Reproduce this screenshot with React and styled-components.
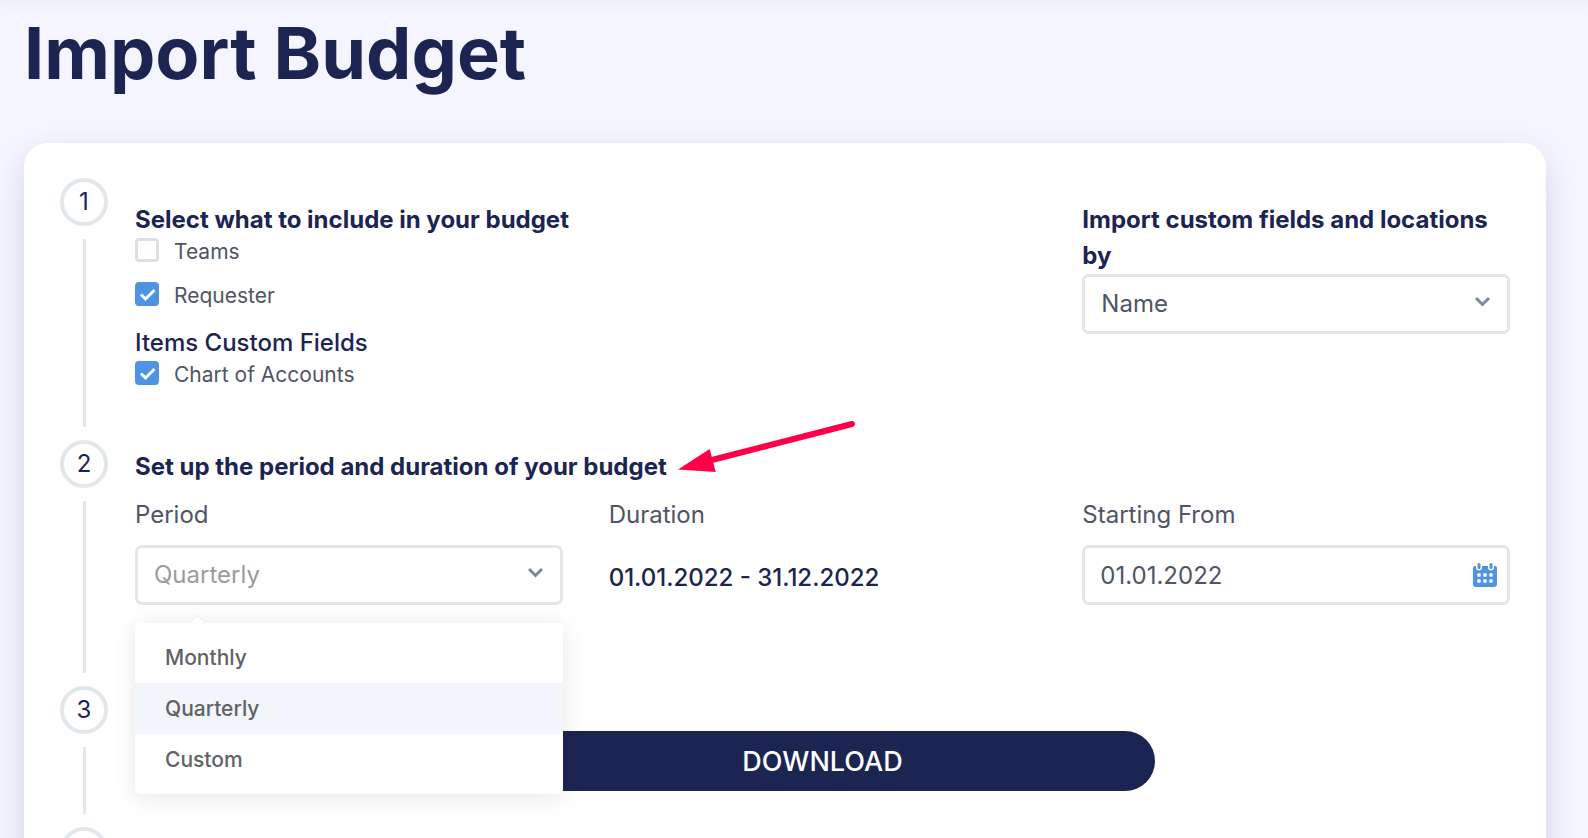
import React, { useState } from "react";
import styled, { createGlobalStyle } from "styled-components";

const navy = "#1c2451";
const slate = "#4f5565";
const line = "#e1e7eb";
const blue = "#4f93e3";

const GlobalStyle = createGlobalStyle`
  *, *::before, *::after { box-sizing: border-box; }
  body {
    margin: 0;
    background: #f5f5ff;
    color: ${navy};
    font-family: Inter, "Liberation Sans", sans-serif;
    font-size: 24px;
    line-height: 36px;
  }
  button, input, select { font: inherit; }
`;

const Page = styled.main`
  height: 100vh;
  overflow-y: auto;
  scrollbar-width: none;
  padding: 0 42px 0 24px;
  box-shadow: inset 0 12px 16px -12px rgba(40, 40, 110, 0.06);
`;

const Title = styled.h1`
  margin: 0;
  padding: 5px 0 42px;
  font-size: 72px;
  line-height: 96px;
  font-weight: 700;
`;

const Card = styled.section`
  padding: 35px 36px;
  background: #fff;
  border-radius: 24px;
  box-shadow: 0 12px 32px rgba(40, 50, 110, 0.16);
`;

const Step = styled.section`
  display: grid;
  grid-template-columns: 48px minmax(0, 1fr);
  column-gap: 27px;
  min-height: ${(p) => p.$height}px;
`;

const Rail = styled.div`
  display: flex;
  flex-direction: column;
  align-items: center;
  gap: 13px;
  padding-bottom: 13px;
`;

const Badge = styled.span`
  display: flex;
  flex: none;
  align-items: center;
  justify-content: center;
  width: 48px;
  height: 48px;
  border: 4px solid ${line};
  border-radius: 50%;
`;

const Connector = styled.span`
  flex: 1;
  width: 3px;
  background: ${line};
`;

const StepBody = styled.div`
  padding-top: ${(p) => p.$top}px;
`;

const Columns = styled.div`
  display: grid;
  grid-template-columns: repeat(3, minmax(0, 1fr));
  column-gap: 46px;
`;

const WideCell = styled.div`
  grid-column: span 2;
`;

const FieldCell = styled.div`
  position: relative;
  padding-top: 12px;
`;

const Heading = styled.h2`
  position: relative;
  width: fit-content;
  margin: 0;
  font-size: 24px;
  line-height: 36px;
  font-weight: 700;
`;

const HeadingLabel = styled.label`
  display: block;
  font-weight: 700;
`;

const SubHeading = styled.h3`
  margin: 19px 0 0;
  font-size: 24px;
  line-height: 36px;
  font-weight: 500;
`;

const CheckList = styled.div`
  display: flex;
  flex-direction: column;
  gap: 20px;
`;

const CheckLabel = styled.label`
  display: flex;
  align-items: flex-start;
  gap: 15px;
  width: fit-content;
  height: 24px;
  color: ${slate};
  font-size: 21px;
  line-height: 27px;
`;

const CheckBox = styled.span`
  display: grid;
  width: 24px;
  height: 24px;

  > * { grid-area: 1 / 1; }
  svg { pointer-events: none; }
`;

const CheckInput = styled.input`
  appearance: none;
  width: 24px;
  height: 24px;
  margin: 0;
  border: 3px solid #dcdfe6;
  border-radius: 4px;
  background: #fff;

  &:checked { border-color: ${blue}; background: ${blue}; }
`;

const FieldLabel = styled.label`
  display: block;
  margin-bottom: 12px;
  color: ${slate};
`;

const Field = styled.div`
  display: flex;
  align-items: center;
  height: 60px;
  border: 3px solid ${line};
  border-radius: 7px;
  background: #fff;
  padding-right: ${(p) => p.$end}px;
`;

const controlReset = `
  flex: 1;
  min-width: 0;
  height: 100%;
  padding: 0 0 0 16px;
  border: 0;
  outline: 0;
  background: transparent;
  appearance: none;
`;

const Select = styled.select`
  ${controlReset}
  color: ${(p) => (p.$muted ? "#9b9b9b" : slate)};
`;

const DateInput = styled.input`
  ${controlReset}
  padding-left: 15px;
  color: ${slate};
`;

const DurationLabel = styled.div`
  margin-bottom: 15px;
  color: ${slate};
`;

const DurationValue = styled.output`
  display: block;
  line-height: 60px;
  font-weight: 500;
`;

const Menu = styled.ul`
  position: absolute;
  z-index: 2;
  top: 100%;
  left: 0;
  right: 0;
  margin: 15px 0 0;
  padding: 9px 0;
  list-style: none;
  background: #fff;
  border-radius: 5px;
  box-shadow: 0 3px 24px rgba(0, 0, 0, 0.1);

  &::before {
    content: "";
    position: absolute;
    top: -6px;
    left: 56px;
    width: 12px;
    height: 12px;
    background: #fff;
    border: 1px solid #ebeef5;
    border-right: 0;
    border-bottom: 0;
    transform: rotate(45deg);
  }
`;

const MenuItem = styled.button`
  position: relative;
  display: block;
  width: 100%;
  height: 51px;
  padding: 0 30px;
  border: 0;
  background: ${(p) => (p.$active ? "#f2f6fa" : "#fff")};
  color: #606266;
  font-size: 21px;
  font-weight: 500;
  text-align: left;
`;

const DownloadButton = styled.button`
  display: block;
  width: 665px;
  max-width: 100%;
  height: 60px;
  margin: 0 auto;
  padding: 2px 0 0;
  border: 0;
  border-radius: 30px;
  background: ${navy};
  color: #fff;
  font-size: 27px;
  font-weight: 500;
`;

const Pointer = styled.svg`
  position: absolute;
  left: 100%;
  bottom: 10px;
  margin-left: 9px;
`;

const ChevronIcon = styled.svg`
  margin-bottom: 4px;
`;

function Chevron() {
  return (
    <ChevronIcon width="16" height="12" viewBox="0 0 16 12" fill="none" aria-hidden="true">
      <path d="M1 2l6.500 6.500L14 2" stroke="#7b88a0" strokeWidth="3" />
    </ChevronIcon>
  );
}

function CalendarIcon() {
  return (
    <svg width="24" height="24" viewBox="0 0 24 24" aria-hidden="true">
      <path
        fill={blue}
        d="M2 3h1v1.500a3 3 0 0 0 6 0V3h6v1.500a3 3 0 0 0 6 0V3h1a2 2 0 0 1 2 2v16a3 3 0 0 1-3 3H3a3 3 0 0 1-3-3V5a2 2 0 0 1 2-2Z"
      />
      <rect x="4.500" width="3" height="6" rx="1.500" fill={blue} />
      <rect x="16.500" width="3" height="6" rx="1.500" fill={blue} />
      {[12, 18].map((y) =>
        [6, 12, 18].map((x) => (
          <rect
            key={`${x}-${y}`}
            x={x - 1.7}
            y={y - 1.7}
            width="3.4"
            height="3.4"
            rx="0.8"
            fill="#fff"
          />
        ))
      )}
    </svg>
  );
}

function Check({ label, defaultChecked }) {
  return (
    <CheckLabel>
      <CheckBox>
        <CheckInput type="checkbox" defaultChecked={defaultChecked} />
        <svg width="24" height="24" viewBox="0 0 24 24" fill="none" aria-hidden="true">
          <path d="m6 12.500 4.500 4.500L19.500 8" stroke="#fff" strokeWidth="3" />
        </svg>
      </CheckBox>
      {label}
    </CheckLabel>
  );
}

function StepRow({ number, height, top, children }) {
  return (
    <Step $height={height}>
      <Rail>
        <Badge>{number}</Badge>
        <Connector />
      </Rail>
      <StepBody $top={top}>{children}</StepBody>
    </Step>
  );
}

const periods = ["Monthly", "Quarterly", "Custom"];

function PeriodField() {
  const [period, setPeriod] = useState("Quarterly");

  return (
    <FieldCell>
      <FieldLabel htmlFor="period">Period</FieldLabel>
      <Field $end={16}>
        <Select
          id="period"
          $muted
          value={period}
          onChange={(event) => setPeriod(event.target.value)}
        >
          {periods.map((name) => (
            <option key={name}>{name}</option>
          ))}
        </Select>
        <Chevron />
      </Field>
      <Menu>
        {periods.map((name) => (
          <li key={name}>
            <MenuItem type="button" $active={name === period} onClick={() => setPeriod(name)}>
              {name}
            </MenuItem>
          </li>
        ))}
      </Menu>
    </FieldCell>
  );
}

export default function App() {
  return (
    <>
      <GlobalStyle />
      <Page>
        <Title>Import Budget</Title>
        <Card>
          <StepRow number={1} height={262} top={24}>
            <Columns>
              <WideCell>
                <Heading>Select what to include in your budget</Heading>
                <CheckList>
                  <Check label="Teams" />
                  <Check label="Requester" defaultChecked />
                </CheckList>
                <SubHeading>Items Custom Fields</SubHeading>
                <CheckList>
                  <Check label="Chart of Accounts" defaultChecked />
                </CheckList>
              </WideCell>
              <div>
                <HeadingLabel htmlFor="import-by">
                  Import custom fields and locations by
                </HeadingLabel>
                <Field $end={16}>
                  <Select id="import-by" defaultValue="Name">
                    <option>Name</option>
                  </Select>
                  <Chevron />
                </Field>
              </div>
            </Columns>
          </StepRow>

          <StepRow number={2} height={246} top={9}>
            <Heading>
              Set up the period and duration of your budget
              <Pointer width="182" height="58" viewBox="0 0 182 58" aria-hidden="true">
                <path d="M176 7 32 44" stroke="#ff0048" strokeWidth="6" strokeLinecap="round" />
                <path d="m2 52.500 31.700-20.500 6 23Z" fill="#ff0048" />
              </Pointer>
            </Heading>
            <Columns>
              <PeriodField />
              <FieldCell>
                <DurationLabel id="duration">Duration</DurationLabel>
                <DurationValue aria-labelledby="duration">01.01.2022 - 31.12.2022</DurationValue>
              </FieldCell>
              <FieldCell>
                <FieldLabel htmlFor="start">Starting From</FieldLabel>
                <Field $end={10}>
                  <DateInput id="start" type="text" defaultValue="01.01.2022" />
                  <CalendarIcon />
                </Field>
              </FieldCell>
            </Columns>
          </StepRow>

          <StepRow number={3} height={141} top={45}>
            <DownloadButton type="button">DOWNLOAD</DownloadButton>
          </StepRow>

          <StepRow height={141} top={45} />
        </Card>
      </Page>
    </>
  );
}
